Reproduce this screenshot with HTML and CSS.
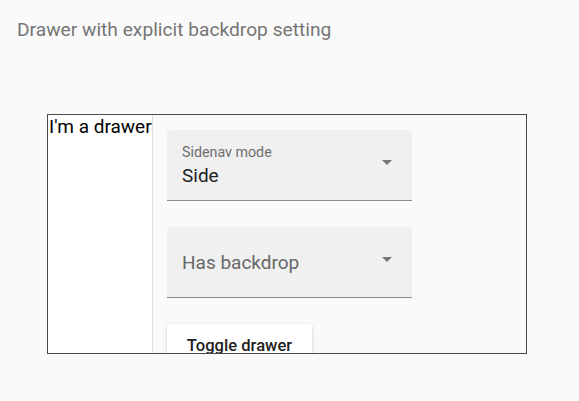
FILE: index.html
```html
<!DOCTYPE html>
<html>
<head>
<meta charset="utf-8">
<link rel="stylesheet" href="styles.css">
</head>
<body>
<h1 class="title">Drawer with explicit backdrop setting</h1>
<div class="container">
  <aside class="drawer">I'm a drawer</aside>
  <main class="content">
    <div class="field">
      <div class="field-inner">
        <span class="label">Sidenav mode</span>
        <span class="value">Side</span>
      </div>
      <span class="arrow"></span>
    </div>
    <div class="field">
      <div class="field-inner">
        <span class="placeholder">Has backdrop</span>
      </div>
      <span class="arrow"></span>
    </div>
    <button class="btn">Toggle drawer</button>
  </main>
</div>
</body>
</html>
```
FILE: styles.css
```css
html, body {
  margin: 0;
  padding: 0;
  background: #fafafa;
  font-family: Roboto, "Liberation Sans", sans-serif;
}
.title {
  margin: 0;
  padding: 19px 0 0 17px;
  font-size: 19.2px;
  font-weight: 400;
  color: #757575;
  line-height: 22px;
}
.container {
  margin: 73px 0 0 47px;
  width: 478px;
  height: 238px;
  border: 1px solid #4a4a4a;
  display: flex;
  overflow: hidden;
}
.drawer {
  width: 103px;
  background: #fff;
  border-right: 1px solid #e0e0e0;
  font-size: 19px;
  line-height: 24px;
  color: #000;
  padding-left: 1px;
  flex-shrink: 0;
}
.content {
  padding: 15px 0 0 14px;
  display: flex;
  flex-direction: column;
  align-items: flex-start;
}
.field {
  width: 245px;
  height: 70px;
  background: #f0f0f0;
  border-radius: 4px 4px 0 0;
  border-bottom: 1px solid #8c8c8c;
  display: flex;
  align-items: center;
  margin-bottom: 26px;
  flex-shrink: 0;
}
.field-inner {
  flex: 1;
  padding-left: 15px;
  display: flex;
  flex-direction: column;
}
.label {
  font-size: 14.25px;
  color: #6e6e6e;
  line-height: 16px;
}
.value {
  font-size: 19px;
  color: #212121;
  line-height: 22px;
  margin-top: 5px;
}
.placeholder {
  font-size: 19px;
  color: #676767;
  line-height: 22px;
  margin-top: 2px;
}
.arrow {
  width: 0;
  height: 0;
  border-left: 5px solid transparent;
  border-right: 5px solid transparent;
  border-top: 5px solid #757575;
  margin-right: 20px;
  margin-top: -6px;
}
.btn {
  width: 145px;
  background: #fff;
  border: none;
  border-radius: 4px;
  box-shadow: 0 3px 1px -2px rgba(0,0,0,.2), 0 2px 2px 0 rgba(0,0,0,.14), 0 1px 5px 0 rgba(0,0,0,.12);
  font-family: Roboto, "Liberation Sans", sans-serif;
  font-size: 16.6px;
  line-height: 20px;
  font-weight: 500;
  color: #212121;
  padding: 12px 0 9px;
  flex-shrink: 0;
}
```
